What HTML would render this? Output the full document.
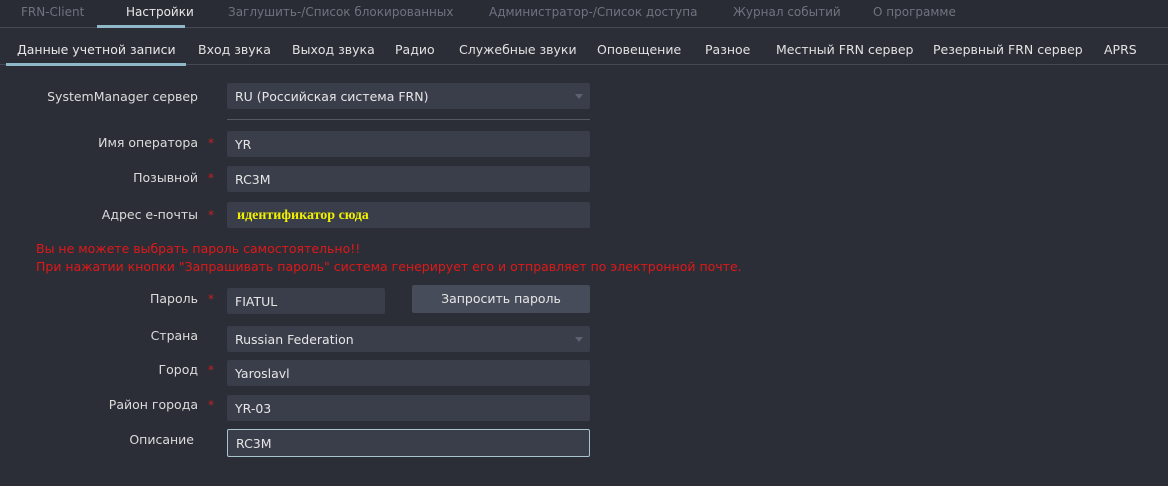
<!DOCTYPE html>
<html><head><meta charset="utf-8"><style>
body{margin:0;width:1168px;height:486px;background:#2b2e37;font-family:"DejaVu Sans","Liberation Sans",sans-serif;font-size:12.5px;color:#e2e2e2;position:relative;overflow:hidden}
.a{position:absolute;white-space:nowrap}
.tb{color:#6f7380;font-size:12px}
.in{position:absolute;left:227px;width:363px;height:26px;background:#3a3e4b;border-radius:2px;box-sizing:border-box;padding-left:8px;line-height:27px;color:#e6e6e6}
.lb{position:absolute;right:970px;text-align:right;white-space:nowrap;color:#dcdcdc}
.st{position:absolute;left:208px;color:#c82020;font-size:12px}
.arr{position:absolute;right:7px;top:11px;width:0;height:0;border-left:4px solid transparent;border-right:4px solid transparent;border-top:5px solid #5e6270}
</style></head><body>
<div class="a" style="left:0;top:0;width:1168px;height:27px;background:#2a2c35;border-bottom:1px solid #454955"></div>
<div class="a tb" style="left:21px;top:5px">FRN-Client</div>
<div class="a" style="left:126px;top:5px;color:#e8e8e8;font-size:12px">Настройки</div>
<div class="a" style="left:97px;top:25px;width:88px;height:3px;background:#8fb8c8"></div>
<div class="a tb" style="left:228px;top:5px">Заглушить-/Список блокированных</div>
<div class="a tb" style="left:489px;top:5px">Администратор-/Список доступа</div>
<div class="a tb" style="left:733px;top:5px">Журнал событий</div>
<div class="a tb" style="left:873px;top:5px">О программе</div>
<div class="a" style="left:0;top:64px;width:1168px;height:1px;background:#454955"></div>
<div class="a" style="left:6px;top:63px;width:180px;height:3px;background:#8fb8c8"></div>
<div class="a" style="left:17px;top:42px;color:#e8e8e8">Данные учетной записи</div>
<div class="a" style="left:198px;top:42px">Вход звука</div>
<div class="a" style="left:292px;top:42px">Выход звука</div>
<div class="a" style="left:395px;top:42px">Радио</div>
<div class="a" style="left:459px;top:42px">Служебные звуки</div>
<div class="a" style="left:597px;top:42px">Оповещение</div>
<div class="a" style="left:705px;top:42px">Разное</div>
<div class="a" style="left:776px;top:42px">Местный FRN сервер</div>
<div class="a" style="left:933px;top:42px">Резервный FRN сервер</div>
<div class="a" style="left:1104px;top:42px">APRS</div>

<div class="lb" style="top:89px">SystemManager сервер</div>
<div class="in" style="top:83px">RU (Российская система FRN)<div class="arr"></div></div>
<div class="a" style="left:227px;top:119px;width:363px;height:1px;background:#555966"></div>

<div class="lb" style="top:135px">Имя оператора</div><div class="st" style="top:136px">*</div>
<div class="in" style="top:131px">YR</div>
<div class="lb" style="top:170px">Позывной</div><div class="st" style="top:171px">*</div>
<div class="in" style="top:166px">RC3M</div>
<div class="lb" style="top:207px">Адрес е-почты</div><div class="st" style="top:208px">*</div>
<div class="in" style="top:202px;color:#f0f000;font-family:'Liberation Serif',serif;font-weight:bold;font-size:14px;padding-left:10px">идентификатор сюда</div>

<div class="a" style="left:36px;top:241px;color:#e01818;font-size:12.5px">Вы не можете выбрать пароль самостоятельно!!</div>
<div class="a" style="left:36px;top:259px;color:#e01818;font-size:12.5px">При нажатии кнопки "Запрашивать пароль" система генерирует его и отправляет по электронной почте.</div>

<div class="lb" style="top:291px">Пароль</div><div class="st" style="top:292px">*</div>
<div class="in" style="top:288px;width:158px">FIATUL</div>
<div class="a" style="left:412px;top:285px;width:178px;height:28px;background:#474c5b;border-radius:2px;text-align:center;line-height:28px;color:#e6e6e6">Запросить пароль</div>

<div class="lb" style="top:328px">Страна</div>
<div class="in" style="top:326px">Russian Federation<div class="arr"></div></div>
<div class="lb" style="top:362px">Город</div><div class="st" style="top:363px">*</div>
<div class="in" style="top:360px">Yaroslavl</div>
<div class="lb" style="top:397px">Район города</div><div class="st" style="top:398px">*</div>
<div class="in" style="top:395px">YR-03</div>
<div class="lb" style="top:432px;right:974px">Описание</div>
<div class="in" style="top:429px;height:28px;border:1px solid #a9c4cc;line-height:27px">RC3M</div>
</body></html>
